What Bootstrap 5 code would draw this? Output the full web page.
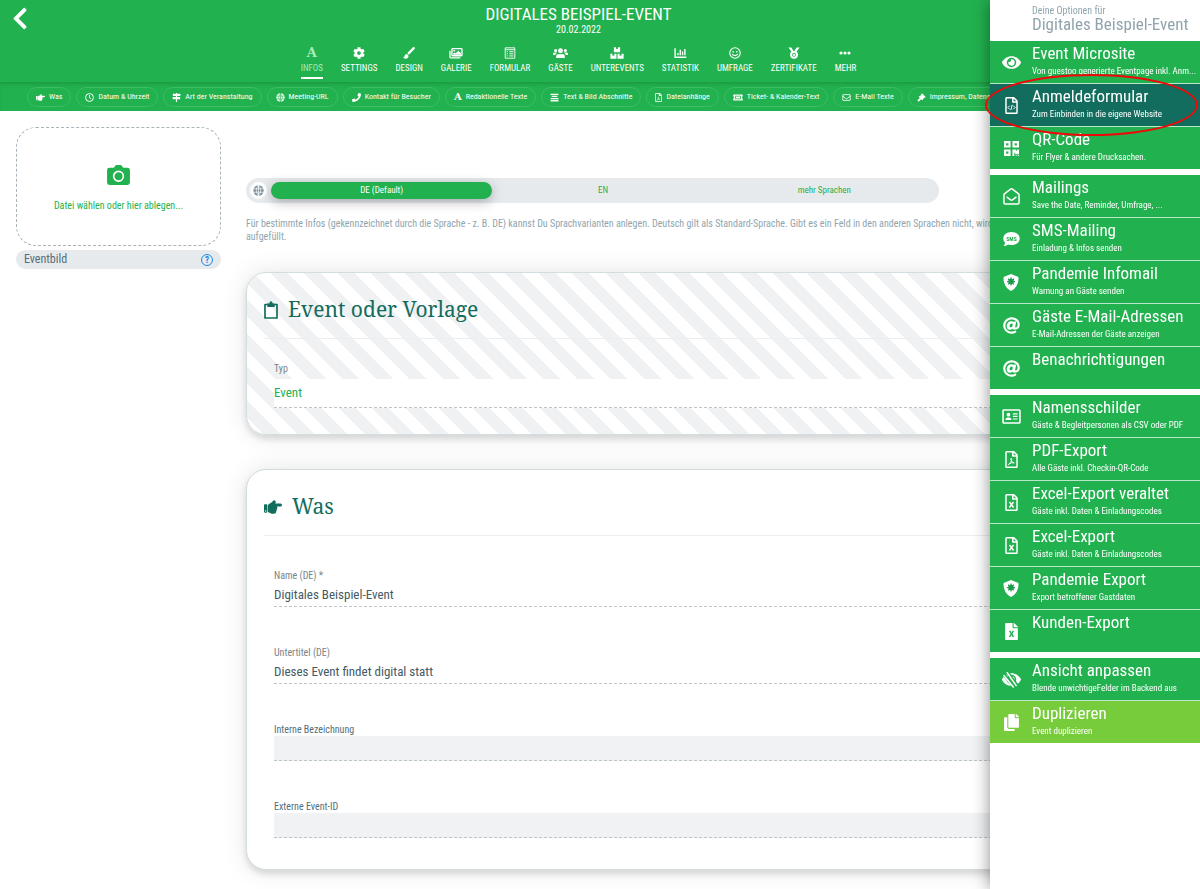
<!DOCTYPE html>
<html lang="de">
<head>
<meta charset="utf-8">
<meta name="viewport" content="width=device-width, initial-scale=1">
<title>Digitales Beispiel-Event</title>
<link href="https://cdn.jsdelivr.net/npm/bootstrap@5.3.0/dist/css/bootstrap.min.css" rel="stylesheet">
<style>
  :root {
    --brand: #22b14f;
    --teal: #136d5e;
    --slate: #546e7a;
    --mist: #90a4ae;
    --fog: #e7eaed;
  }
  body { font-family: "Roboto Condensed", "Liberation Sans Narrow", Roboto, sans-serif; font-size: 10px; line-height: 13px; color: var(--slate); background: #fff; overflow-x: hidden; }
  a { text-decoration: none; }
  .ico { fill: currentColor; flex: none; display: block; overflow: visible; }
  .ln { fill: none; stroke: currentColor; }

  .topbar { background: var(--brand); color: #fff; }
  .topbar-head { padding: 5px 43px 0 0; height: 82px; }
  .back-btn { position: absolute; left: 12px; top: 6px; color: #fff; line-height: 0; }
  .event-title { font-size: 17px; line-height: 18px; font-weight: 400; text-transform: uppercase; }
  .event-date { font-size: 10px; line-height: 13px; }
  .tabs { margin-top: 10px; gap: 18px; }
  .tabs a { color: #fff; font-size: 9px; line-height: 13px; text-transform: uppercase; padding-bottom: 2px; border-bottom: 2px solid transparent; white-space: nowrap; gap: 2px; }
  .tabs a.active { color: #a5ecbc; border-color: #fff; }
  .glyph-a { font-family: "Roboto Slab", "DejaVu Serif", serif; font-weight: 700; line-height: 14px; font-size: 13px; }
  .chips { padding: 5px 27px 4px; gap: 5px; box-shadow: inset 0 4px 5px -3px rgba(0,60,20,.28); overflow: hidden; }
  .chips a { flex: none; color: #fff; font-size: 8px; line-height: 18px; padding: 0 8px; border: 1px solid #3cbc64; border-radius: 10px; gap: 4px; white-space: nowrap; }
  .chips .glyph-a { font-size: 10px; line-height: 18px; }

  .page-body { padding: 16px 16px 20px; gap: 25px; }
  .side { flex: 0 0 205px; }
  .dropzone { height: 119px; border: 1px dashed #a9b4ba; border-radius: 20px; color: var(--brand); gap: 14px; cursor: pointer; padding-top: 4px; }
  .pic-label { margin-top: 4px; padding: 0 8px; border-radius: 10px; background: var(--fog); font-size: 12px; line-height: 19px; }
  .help { width: 12px; height: 12px; border: 1px solid #1e88e5; color: #1e88e5; border-radius: 50%; background: none; padding: 0; font-size: 9px; line-height: 10px; font-weight: 700; }

  .content-col { padding: 51px 14px 0 0; min-width: 0; }
  .langbar { background: var(--fog); border-radius: 13px; padding: 4px; }
  .langbar .globe { width: 17px; height: 17px; border-radius: 50%; background: #fff; color: #78909c; }
  .langbar button { flex: 1 1 0; border: 0; background: none; color: var(--brand); font-size: 9px; line-height: 17px; padding: 0; border-radius: 9px; }
  .langbar button.active { background: var(--brand); color: #fff; box-shadow: 0 3px 12px rgba(0,0,0,.28); }
  .hint { margin: 14px 0 29px; color: var(--mist); }

  .panel { border: 1px solid #d3dcdf; border-radius: 20px; background: #fff; box-shadow: 0 4px 6px rgba(0,0,0,.12), 0 0 26px rgba(0,0,0,.10); padding: 0 17px; }
  .panel + .panel { margin-top: 34px; }
  .panel h2 { font-family: "Roboto Slab", "Noto Serif", "DejaVu Serif", serif; font-size: 21px; line-height: 29px; font-weight: 400; color: var(--teal); padding: 22px 0 14px; margin: 0; border-bottom: 1px solid #eceff1; gap: 10px; }
  .striped { background: repeating-linear-gradient(45deg, #fff 0 12.5%, #eff1f3 12.5% 25%) left bottom / 67px 67px; padding-bottom: 26px; }
  .field { padding: 0 10px; }
  .field label { display: block; font-size: 10px; line-height: 13px; color: #78848a; }
  .field label.dark { color: var(--slate); }
  .field input, .field select { display: block; width: 100%; border: 0; border-bottom: 1px dashed #bcc5ca; border-radius: 0; background: #fff; color: #455a64; font-size: 13px; line-height: 18px; padding: 0; height: 25px; appearance: none; outline: 0; }
  .field select { height: 29px; color: var(--brand); margin-top: 4px; }
  .field input.blank { background: #f0f2f4; }
  .striped .field { padding-top: 23px; }
  .fields { padding: 33px 0 31px; }
  .fields .field + .field { margin-top: 39px; }

  .drawer.offcanvas { width: 210px; border: 0; --bs-offcanvas-bg: #fff; box-shadow: 0 0 16px rgba(0,0,0,.45); }
  .drawer-head { height: 41px; padding: 5px 0 0 42px; color: var(--mist); white-space: nowrap; }
  .drawer-head p { font-size: 10px; line-height: 11px; margin: 0; }
  .drawer-head h1 { font-size: 17px; line-height: 16px; margin: 0; font-weight: 400; }
  .group { margin-bottom: 6px; gap: 1px; background: #b9e8c8; }
  .group a { position: relative; display: flex; height: 42px; background: var(--brand); color: #fff; }
  .group a:hover, .group a.current { background: var(--teal); }
  .group a.lime { background: #77cc3b; }
  .group .icobox { flex: 0 0 42px; display: flex; align-items: center; justify-content: center; }
  .group .copy { min-width: 0; padding-top: 3px; }
  .group strong { display: block; font-weight: 400; font-size: 17px; line-height: 19px; white-space: nowrap; }
  .group small { display: block; font-size: 9px; line-height: 16px; white-space: nowrap; }
  .marker { position: absolute; left: -5px; top: -10px; width: 213px; height: 62px; border: 2px solid #f00808; border-radius: 50%; z-index: 2; pointer-events: none; }
</style>
</head>
<body>

<svg class="d-none" aria-hidden="true">
  <symbol id="i-left" viewBox="0 0 320 512"><path d="M34.52 239.03L228.87 44.69c9.37-9.37 24.57-9.37 33.94 0l22.67 22.67c9.36 9.36 9.37 24.52.04 33.9L131.49 256l154.02 154.75c9.34 9.38 9.32 24.54-.04 33.9l-22.67 22.67c-9.37 9.37-24.57 9.37-33.94 0L34.52 272.97c-9.37-9.37-9.37-24.57 0-33.94z"/></symbol>
  <symbol id="i-cog" viewBox="0 0 512 512"><path d="M487.4 315.7l-42.6-24.6c4.3-23.2 4.3-47 0-70.2l42.6-24.6c4.9-2.8 7.1-8.6 5.5-14-11.1-35.6-30-67.8-54.7-94.6-3.8-4.1-10-5.1-14.8-2.3L380.8 110c-17.9-15.4-38.5-27.3-60.8-35.1V25.8c0-5.6-3.9-10.5-9.4-11.7-36.7-8.2-74.3-7.8-109.2 0-5.5 1.2-9.4 6.1-9.4 11.7V75c-22.2 7.9-42.8 19.8-60.8 35.1L88.7 85.5c-4.9-2.8-11-1.9-14.8 2.3-24.7 26.7-43.6 58.9-54.7 94.6-1.7 5.4.6 11.2 5.5 14L67.3 221c-4.3 23.2-4.3 47 0 70.2l-42.6 24.6c-4.9 2.8-7.1 8.6-5.5 14 11.1 35.6 30 67.8 54.7 94.6 3.8 4.1 10 5.1 14.8 2.3l42.6-24.6c17.9 15.4 38.5 27.3 60.8 35.1v49.2c0 5.6 3.9 10.5 9.4 11.7 36.7 8.2 74.3 7.8 109.2 0 5.5-1.2 9.4-6.1 9.4-11.7v-49.2c22.2-7.9 42.8-19.8 60.8-35.1l42.6 24.6c4.9 2.8 11 1.9 14.8-2.3 24.7-26.7 43.6-58.9 54.7-94.6 1.5-5.5-.7-11.3-5.6-14.1zM256 336c-44.1 0-80-35.9-80-80s35.9-80 80-80 80 35.9 80 80-35.9 80-80 80z"/></symbol>
  <symbol id="i-brush" viewBox="0 0 16 16"><path d="M15.4.5c-.7-.6-1.7-.5-2.4.1L6.3 7.2c-.4.4-.5.8-.4 1.2l1.6 1.7c.4 0 .8-.1 1.1-.5l6.7-7c.7-.6.7-1.500.1-2.100zM5.200 9.300c-1.700-.1-2.700.9-3 2.200-.2 1-.7 1.700-2 2 .9 1.300 2.300 2 3.900 2 2.100 0 3.400-1.500 3.300-3.700z"/></symbol>
  <symbol id="i-images" viewBox="0 0 18 16"><path class="ln" stroke-width="1.700" d="M4.800 2.300h10.900q1 0 1 1v7.200q0 1-1 1H4.800q-1 0-1-1V3.300q0-1 1-1zM1.300 5v8q0 1.300 1.300 1.300h11.800"/><circle cx="6.800" cy="5" r="1.200"/><path d="M5.300 10.300V8.600l1.800-1.400 1.400 1.200L12 5l3.500 3.200v2.100z"/></symbol>
  <symbol id="i-form" viewBox="0 0 16 16"><path class="ln" stroke-width="1.200" d="M1.600 1.100h12.800v13.800H1.600zM1.600 3.600h12.800M7 6.300h5.500M7 9.100h5.500M7 11.900h5.500M3.600 6.300h1.600M3.600 9.100h1.600M3.600 11.900h1.600"/></symbol>
  <symbol id="i-users" viewBox="0 0 20 16"><circle cx="10" cy="5" r="3.300"/><circle cx="3.500" cy="4.600" r="2"/><circle cx="16.500" cy="4.600" r="2"/><path d="M4.200 14.500v-1.800q0-3.400 3.300-3.400 2.500.8 5 0 3.300 0 3.300 3.400v1.800zM0 10.500V9.200q0-1.900 1.900-1.900h2.300q.7 0 1.200.3Q3.400 8.800 3 10.500zM20 10.500V9.200q0-1.900-1.900-1.900h-2.300q-.7 0-1.200.3 2 1.200 2.400 2.900z"/></symbol>
  <symbol id="i-boxes" viewBox="0 0 18 16"><path d="M5 .5h2.800v2.700l1.200-.6 1.200.6V.5H13V7H5zM.5 9h2.700v2.700l1.200-.6 1.200.6V9h2.700v6.500H.5zM9.700 9h2.700v2.700l1.200-.6 1.200.6V9h2.700v6.500H9.700z"/></symbol>
  <symbol id="i-chart" viewBox="0 0 18 16"><path class="ln" stroke-width="1.900" d="M1.500 1.500v12.300h15.500M5.500 11V8M8.700 11V3.500M11.900 11V6M15.100 11V2.500"/></symbol>
  <symbol id="i-smile" viewBox="0 0 16 16"><circle class="ln" cx="8" cy="8" r="7" stroke-width="1.500"/><circle cx="5.500" cy="6.400" r="1.100"/><circle cx="10.500" cy="6.400" r="1.100"/><path class="ln" stroke-width="1.500" stroke-linecap="round" d="M4.600 9.900q3.400 3.300 6.800 0"/></symbol>
  <symbol id="i-medal" viewBox="0 0 16 16"><path d="M.5.500h4l2.600 4.200-2.300 1.500zM15.500.5h-4L8.900 4.700l2.300 1.500z"/><circle class="ln" cx="8" cy="10.300" r="3.900" stroke-width="2.700"/><path d="M8 8l.7 1.500 1.600.2-1.200 1.100.3 1.600L8 11.600l-1.400.8.3-1.600-1.200-1.100 1.600-.2z"/></symbol>
  <symbol id="i-dots" viewBox="0 0 18 16"><circle cx="3" cy="8" r="2.400"/><circle cx="9" cy="8" r="2.400"/><circle cx="15" cy="8" r="2.400"/></symbol>
  <symbol id="i-hand" viewBox="0 0 512 512"><path d="M512 199.652c0 23.625-20.65 43.826-44.8 43.826h-99.851c16.34 17.048 18.346 49.766-6.299 70.944 14.288 22.829 2.147 53.017-16.45 62.315C353.574 425.878 322.654 448 272 448c-2.746 0-13.276-.203-16-.195-61.971.168-76.894-31.065-123.731-38.315C120.596 407.683 112 397.599 112 385.786V214.261l.002-.001c.011-18.366 10.607-35.889 28.464-43.845 28.886-12.994 95.413-49.038 107.534-77.323 7.797-18.194 21.384-29.084 40-29.092 34.222-.014 57.752 35.098 44.119 66.908-3.583 8.359-8.312 16.670-14.153 24.918H467.200c23.450 0 44.800 20.543 44.800 43.826zM96 200v192c0 13.255-10.745 24-24 24H24c-13.255 0-24-10.745-24-24V200c0-13.255 10.745-24 24-24h48c13.255 0 24 10.745 24 24zM68 368c0-11.046-8.954-20-20-20s-20 8.954-20 20 8.954 20 20 20 20-8.954 20-20z"/></symbol>
  <symbol id="i-clock" viewBox="0 0 16 16"><circle class="ln" cx="8" cy="8" r="7" stroke-width="1.700"/><path class="ln" stroke-width="1.700" d="M8 3.500v4.800l2.800 2"/></symbol>
  <symbol id="i-signs" viewBox="0 0 16 16"><path d="M7 0h2v1.300h5L15.700 3.200 14 5.200H1.500V1.300H7zM7 5.200h2V7h5.500v4H9v5H7v-5H2L.3 9 2 7h5z"/></symbol>
  <symbol id="i-globe" viewBox="0 0 16 16"><circle cx="8" cy="8" r="7.500"/><path fill="none" stroke="var(--cut)" stroke-width="1" d="M0 5.500h16M0 10.500h16M8 0v16M8 .5q-6.500 7.500 0 15M8 .5q6.500 7.500 0 15"/></symbol>
  <symbol id="i-phone" viewBox="0 0 512 512"><path d="M493.400 24.600l-104-24c-11.300-2.600-22.900 3.300-27.500 13.900l-48 112c-4.200 9.800-1.400 21.300 6.900 28l60.600 49.600c-36 76.700-98.900 140.500-177.200 177.200l-49.600-60.600c-6.800-8.300-18.200-11.100-28-6.900l-112 48C3.900 366.500-2 378.100.6 389.400l24 104C27.100 504.200 36.700 512 48 512c256.100 0 464-207.500 464-464 0-11.200-7.700-20.900-18.600-23.400z"/></symbol>
  <symbol id="i-lines" viewBox="0 0 16 16"><path d="M1 1.200h14v2.300H1zM3 5h10v2.300H3zM1 8.800h14v2.300H1zM1 12.600h14v2.300H1z"/></symbol>
  <symbol id="i-file" viewBox="0 0 384 512"><path d="M369.900 97.900L286 14C277 5 264.800-.1 252.100-.1H48C21.500 0 0 21.500 0 48v416c0 26.500 21.500 48 48 48h288c26.500 0 48-21.500 48-48V131.900c0-12.700-5.100-25-14.100-34zM332.100 128H256V51.900l76.100 76.100zM48 464V48h160v104c0 13.300 10.700 24 24 24h104v288H48z"/></symbol>
  <symbol id="i-pdf" viewBox="0 0 384 512"><use href="#i-file"/><path class="ln" stroke-width="28" stroke-linejoin="round" d="M180 215q-14 30 8 78 25 52 88 64-92-18-168 34-24 30 16 8 44-34 66-106 20-44-10-78z"/></symbol>
  <symbol id="i-xls" viewBox="0 0 384 512"><use href="#i-file"/><path class="ln" stroke-width="44" d="M130 236l124 172M254 236L130 408"/></symbol>
  <symbol id="i-code" viewBox="0 0 384 512"><use href="#i-file"/><path class="ln" stroke-width="30" d="M138 262l-54 54 54 54M246 262l54 54-54 54M214 236l-44 160"/></symbol>
  <symbol id="i-xlsfull" viewBox="0 0 384 512"><path fill-rule="evenodd" d="M224 136V0H24C10.700 0 0 10.700 0 24v464c0 13.300 10.700 24 24 24h336c13.300 0 24-10.700 24-24V160H248c-13.200 0-24-10.800-24-24zM110 236h52l30 58 32-58h50l-54 90 54 96h-50l-32-62-32 62h-50l56-96zM377 105L279 7c-4.500-4.500-10.600-7-17-7h-6v128h128v-6.100c0-6.300-2.500-12.400-7-16.900z"/></symbol>
  <symbol id="i-ticket" viewBox="0 0 18 16"><path fill-rule="evenodd" d="M1.500 2.500h15q1 0 1 1v2.700q-1.500.3-1.500 1.800t1.500 1.800v2.700q0 1-1 1h-15q-1 0-1-1V9.800Q2 9.500 2 8T.5 6.200V3.500q0-1 1-1zM4 5v6h10V5z"/><path d="M5.300 6.200h7.400v3.600H5.300z"/></symbol>
  <symbol id="i-mail" viewBox="0 0 18 16"><path class="ln" stroke-width="1.700" d="M2.300 2.300h13.400q.8 0 .8.800v9.800q0 .8-.8.800H2.300q-.8 0-.8-.8V3.100q0-.8.8-.8zM2 5.500l5.500 4.300q1.500 1 3 0L16 5.500"/></symbol>
  <symbol id="i-gavel" viewBox="0 0 16 16"><path d="M9 .5l6.500 6.500-1.400 1.400-.8-.4-2.900 2.900.4.800-1.400 1.400-2.200-2.200L3 15.500.5 13l4.600-4.200-2.200-2.200 1.400-1.400.8.400L8 2.700l-.4-.8z"/></symbol>
  <symbol id="i-camera" viewBox="0 0 24 21"><path d="M2.500 3H7l1.800-2.400Q9.200 0 10 0h4q.8 0 1.200.6L17 3h4.500Q24 3 24 5.500v13q0 2.500-2.500 2.500h-19Q0 21 0 18.500v-13Q0 3 2.500 3z"/><circle cx="12" cy="11.800" r="5.100" fill="none" stroke="#fff" stroke-width="1.800"/></symbol>
  <symbol id="i-clip" viewBox="0 0 14 18"><path class="ln" stroke-width="1.700" stroke-linejoin="round" d="M1 3.500h12V17H1z"/><path d="M3.300 2.500h2Q5.500.3 7 .3t1.700 2.200h2V6H3.300z"/></symbol>
  <symbol id="i-eye" viewBox="0 0 576 512"><path d="M572.520 241.400C518.290 135.590 410.930 64 288 64S57.680 135.640 3.480 241.410a32.350 32.350 0 0 0 0 29.190C57.710 376.410 165.070 448 288 448s230.320-71.640 284.520-177.410a32.350 32.350 0 0 0 0-29.190zM288 400a144 144 0 1 1 144-144 143.930 143.930 0 0 1-144 144zm0-240a95.310 95.310 0 0 0-25.310 3.790 47.850 47.850 0 0 1-66.900 66.900A95.780 95.780 0 1 0 288 160z"/></symbol>
  <symbol id="i-lowvision" viewBox="0 0 576 512"><use href="#i-eye"/><path fill="none" stroke="#22b14f" stroke-width="104" d="M60 110l330 400M150 20l320 440"/><path class="ln" stroke-width="46" stroke-linecap="round" d="M62 140l280 345M160 50l270 390"/></symbol>
  <symbol id="i-qr" viewBox="0 0 16 16"><path fill-rule="evenodd" d="M0 0h7v7H0zM2.300 2.300v2.400h2.400V2.300zM9 0h7v7H9zM11.300 2.300v2.400h2.400V2.300zM0 9h7v7H0zM2.300 11.300v2.400h2.400v-2.400zM9 9h4v1.500h1V9h2v5h-4v-1.500h-1V16H9zM12.500 15h1v1h-1zM14.800 15H16v1h-1.200z"/></symbol>
  <symbol id="i-open" viewBox="0 0 18 18"><path class="ln" stroke-width="1.600" stroke-linejoin="round" d="M1 7.200Q1 6.600 1.500 6.200L8 1.200q1-.7 2 0l6.500 5q.5.400.5 1V15.500q0 1.400-1.400 1.400H2.400Q1 16.900 1 15.500zM3.800 9.500L8 12.600q1 .7 2 0l4.200-3.100"/></symbol>
  <symbol id="i-sms" viewBox="0 0 18 16"><path d="M9 .5c5 0 8.700 3 8.700 6.900S14 14.300 9 14.300q-2 0-3.600-.6Q3.300 15.500.5 15.500q1.500-1.600 1.700-3.400Q.3 10 .3 7.400C.3 3.500 4 .5 9 .5z"/><text x="9" y="9.600" text-anchor="middle" font-size="6" font-weight="700" style="fill:var(--brand)">SMS</text></symbol>
  <symbol id="i-shield" viewBox="0 0 16 18"><path d="M8 0l7.200 3q.8.300.8 1.200 0 9.500-8 13.800Q0 13.700 0 4.200 0 3.300.8 3z"/><g fill="none" stroke="#1b9a4c" stroke-width="1.300"><circle cx="8" cy="8" r="2.300" fill="#22b14f"/><path d="M8 3.800v8.400M3.800 8h8.400M5 5l6 6M11 5l-6 6"/></g></symbol>
  <symbol id="i-at" viewBox="0 0 512 512"><path d="M256 8C118.941 8 8 118.919 8 256c0 137.059 110.919 248 248 248 48.154 0 95.342-14.140 135.408-40.223 12.005-7.815 14.625-24.288 5.552-35.372l-10.177-12.433c-7.671-9.371-21.179-11.667-31.373-5.129C325.920 429.757 291.314 440 256 440c-101.458 0-184-82.542-184-184S154.542 72 256 72c100.139 0 184 57.619 184 160 0 38.786-21.093 79.742-58.170 83.693-17.349-.454-16.910-12.857-13.476-30.024l23.433-121.110C394.653 149.750 383.308 136 368.225 136h-44.981a13.518 13.518 0 0 0-13.432 11.993l-.01.092c-14.697-17.901-40.448-21.775-59.971-21.775-74.580 0-137.831 62.234-137.831 151.460 0 65.303 36.785 105.870 96 105.870 26.984 0 57.369-15.637 74.991-38.333 9.522 34.104 40.613 34.104 70.671 34.104C462.609 379.410 504 307.798 504 232 504 95.653 394.023 8 256 8zm-21.680 304.430c-22.249 0-36.070-15.623-36.070-40.771 0-44.993 30.779-72.729 58.630-72.729 22.292 0 35.601 15.241 35.601 40.770 0 45.061-33.875 72.730-58.161 72.730z"/></symbol>
  <symbol id="i-card" viewBox="0 0 20 16"><path class="ln" stroke-width="1.700" d="M2 1h16q1 0 1 1v12q0 1-1 1H2q-1 0-1-1V2q0-1 1-1z"/><circle cx="6.700" cy="6" r="2"/><path d="M3.400 11.800q0-2.800 2.200-2.800h2.200Q10 9 10 11.800zM11.500 4.600h5v1.300h-5zM11.500 7.300h5v1.300h-5zM11.500 10h5v1.300h-5z"/></symbol>
  <symbol id="i-copy" viewBox="0 0 448 512"><path d="M320 448v40c0 13.255-10.745 24-24 24H24c-13.255 0-24-10.745-24-24V120c0-13.255 10.745-24 24-24h72v296c0 30.879 25.121 56 56 56h168zm0-344V0H152c-13.255 0-24 10.745-24 24v368c0 13.255 10.745 24 24 24h272c13.255 0 24-10.745 24-24V128H344c-13.200 0-24-10.800-24-24zm120.971-31.029L375.029 7.029A24 24 0 0 0 358.059 0H352v96h96v-6.059a24 24 0 0 0-7.029-16.970z"/></symbol>
</svg>

<header class="topbar">
  <div class="topbar-head position-relative text-center">
    <a class="back-btn" href="#" aria-label="Zurück"><svg class="ico" width="16" height="25"><use href="#i-left"/></svg></a>
    <div class="event-title">Digitales Beispiel-Event</div>
    <div class="event-date">20.02.2022</div>
    <nav class="tabs d-flex justify-content-center" aria-label="Bereiche">
      <a href="#" class="active d-flex flex-column align-items-center"><span class="glyph-a" aria-hidden="true">A</span>Infos</a>
      <a href="#" class="d-flex flex-column align-items-center"><svg class="ico" width="12" height="14"><use href="#i-cog"/></svg>Settings</a>
      <a href="#" class="d-flex flex-column align-items-center"><svg class="ico" width="12" height="14"><use href="#i-brush"/></svg>Design</a>
      <a href="#" class="d-flex flex-column align-items-center"><svg class="ico" width="14" height="14"><use href="#i-images"/></svg>Galerie</a>
      <a href="#" class="d-flex flex-column align-items-center"><svg class="ico" width="12" height="14"><use href="#i-form"/></svg>Formular</a>
      <a href="#" class="d-flex flex-column align-items-center"><svg class="ico" width="15" height="14"><use href="#i-users"/></svg>Gäste</a>
      <a href="#" class="d-flex flex-column align-items-center"><svg class="ico" width="14" height="14"><use href="#i-boxes"/></svg>Unterevents</a>
      <a href="#" class="d-flex flex-column align-items-center"><svg class="ico" width="13" height="14"><use href="#i-chart"/></svg>Statistik</a>
      <a href="#" class="d-flex flex-column align-items-center"><svg class="ico" width="12" height="14"><use href="#i-smile"/></svg>Umfrage</a>
      <a href="#" class="d-flex flex-column align-items-center"><svg class="ico" width="12" height="14"><use href="#i-medal"/></svg>Zertifikate</a>
      <a href="#" class="d-flex flex-column align-items-center"><svg class="ico" width="12" height="14"><use href="#i-dots"/></svg>Mehr</a>
    </nav>
  </div>
  <nav class="chips d-flex" aria-label="Abschnitte">
    <a href="#was" class="d-flex align-items-center"><svg class="ico" width="9" height="9"><use href="#i-hand"/></svg>Was</a>
    <a href="#" class="d-flex align-items-center"><svg class="ico" width="9" height="9"><use href="#i-clock"/></svg>Datum &amp; Uhrzeit</a>
    <a href="#" class="d-flex align-items-center"><svg class="ico" width="9" height="9"><use href="#i-signs"/></svg>Art der Veranstaltung</a>
    <a href="#" class="d-flex align-items-center"><svg class="ico" width="9" height="9" style="--cut:#22b14f"><use href="#i-globe"/></svg>Meeting-URL</a>
    <a href="#" class="d-flex align-items-center"><svg class="ico" width="9" height="9"><use href="#i-phone"/></svg>Kontakt für Besucher</a>
    <a href="#" class="d-flex align-items-center"><span class="glyph-a" aria-hidden="true">A</span>Redaktionelle Texte</a>
    <a href="#" class="d-flex align-items-center"><svg class="ico" width="9" height="9"><use href="#i-lines"/></svg>Text &amp; Bild Abschnitte</a>
    <a href="#" class="d-flex align-items-center"><svg class="ico" width="7" height="9"><use href="#i-pdf"/></svg>Dateianhänge</a>
    <a href="#" class="d-flex align-items-center"><svg class="ico" width="10" height="9"><use href="#i-ticket"/></svg>Ticket- &amp; Kalender-Text</a>
    <a href="#" class="d-flex align-items-center"><svg class="ico" width="9" height="9"><use href="#i-mail"/></svg>E-Mail Texte</a>
    <a href="#" class="d-flex align-items-center"><svg class="ico" width="9" height="9"><use href="#i-gavel"/></svg>Impressum, Datenschutz</a>
  </nav>
</header>

<div class="page-body d-flex">
  <aside class="side">
    <label class="dropzone d-flex flex-column align-items-center justify-content-center">
      <svg class="ico" width="23" height="20"><use href="#i-camera"/></svg>
      <span>Datei wählen oder hier ablegen...</span>
      <input type="file" class="visually-hidden">
    </label>
    <div class="pic-label d-flex align-items-center justify-content-between">
      <span>Eventbild</span>
      <button type="button" class="help">?</button>
    </div>
  </aside>

  <main class="content-col flex-grow-1">
    <div class="langbar d-flex w-75">
      <span class="globe d-flex align-items-center justify-content-center flex-shrink-0 me-1"><svg class="ico" width="11" height="11" style="--cut:#fff"><use href="#i-globe"/></svg></span>
      <button type="button" class="active">DE (Default)</button>
      <button type="button">EN</button>
      <button type="button">mehr Sprachen</button>
    </div>
    <p class="hint">Für bestimmte Infos (gekennzeichnet durch die Sprache - z. B. DE) kannst Du Sprachvarianten anlegen. Deutsch gilt als Standard-Sprache. Gibt es ein Feld in den anderen Sprachen nicht, wird es<br>aufgefüllt.</p>

    <section class="panel striped">
      <h2 class="d-flex align-items-center"><svg class="ico" width="14" height="18"><use href="#i-clip"/></svg>Event oder Vorlage</h2>
      <div class="field">
        <label for="typ">Typ</label>
        <select id="typ"><option>Event</option></select>
      </div>
    </section>

    <section class="panel" id="was">
      <h2 class="d-flex align-items-center"><svg class="ico" width="18" height="18"><use href="#i-hand"/></svg>Was</h2>
      <div class="fields">
        <div class="field"><label for="name">Name (DE) *</label><input id="name" type="text" value="Digitales Beispiel-Event"></div>
        <div class="field"><label for="sub">Untertitel (DE)</label><input id="sub" type="text" value="Dieses Event findet digital statt"></div>
        <div class="field"><label class="dark" for="intern">Interne Bezeichnung</label><input class="blank" id="intern" type="text"></div>
        <div class="field"><label class="dark" for="extern">Externe Event-ID</label><input class="blank" id="extern" type="text"></div>
      </div>
    </section>
  </main>
</div>

<aside class="drawer offcanvas offcanvas-end show" data-bs-backdrop="false" data-bs-scroll="true" tabindex="-1" aria-label="Optionen">
  <div class="drawer-head">
    <p>Deine Optionen für</p>
    <h1>Digitales Beispiel-Event</h1>
  </div>
  <nav class="group d-flex flex-column">
    <a href="#"><span class="icobox"><svg class="ico" width="19" height="17"><use href="#i-eye"/></svg></span><span class="copy"><strong>Event Microsite</strong><small>Von guestoo generierte Eventpage inkl. Anm...</small></span></a>
    <a href="#" class="current"><span class="icobox"><svg class="ico" width="13" height="17"><use href="#i-code"/></svg></span><span class="copy"><strong>Anmeldeformular</strong><small>Zum Einbinden in die eigene Website</small></span><span class="marker"></span></a>
    <a href="#"><span class="icobox"><svg class="ico" width="15" height="15"><use href="#i-qr"/></svg></span><span class="copy"><strong>QR-Code</strong><small>Für Flyer &amp; andere Drucksachen.</small></span></a>
  </nav>
  <nav class="group d-flex flex-column">
    <a href="#"><span class="icobox"><svg class="ico" width="17" height="17"><use href="#i-open"/></svg></span><span class="copy"><strong>Mailings</strong><small>Save the Date, Reminder, Umfrage, ...</small></span></a>
    <a href="#"><span class="icobox"><svg class="ico" width="17" height="16"><use href="#i-sms"/></svg></span><span class="copy"><strong>SMS-Mailing</strong><small>Einladung &amp; Infos senden</small></span></a>
    <a href="#"><span class="icobox"><svg class="ico" width="16" height="17"><use href="#i-shield"/></svg></span><span class="copy"><strong>Pandemie Infomail</strong><small>Warnung an Gäste senden</small></span></a>
    <a href="#"><span class="icobox"><svg class="ico" width="17" height="17"><use href="#i-at"/></svg></span><span class="copy"><strong>Gäste E-Mail-Adressen</strong><small>E-Mail-Adressen der Gäste anzeigen</small></span></a>
    <a href="#"><span class="icobox"><svg class="ico" width="17" height="17"><use href="#i-at"/></svg></span><span class="copy"><strong>Benachrichtigungen</strong></span></a>
  </nav>
  <nav class="group d-flex flex-column">
    <a href="#"><span class="icobox"><svg class="ico" width="19" height="15"><use href="#i-card"/></svg></span><span class="copy"><strong>Namensschilder</strong><small>Gäste &amp; Begleitpersonen als CSV oder PDF</small></span></a>
    <a href="#"><span class="icobox"><svg class="ico" width="13" height="17"><use href="#i-pdf"/></svg></span><span class="copy"><strong>PDF-Export</strong><small>Alle Gäste inkl. Checkin-QR-Code</small></span></a>
    <a href="#"><span class="icobox"><svg class="ico" width="13" height="17"><use href="#i-xls"/></svg></span><span class="copy"><strong>Excel-Export veraltet</strong><small>Gäste inkl. Daten &amp; Einladungscodes</small></span></a>
    <a href="#"><span class="icobox"><svg class="ico" width="13" height="17"><use href="#i-xls"/></svg></span><span class="copy"><strong>Excel-Export</strong><small>Gäste inkl. Daten &amp; Einladungscodes</small></span></a>
    <a href="#"><span class="icobox"><svg class="ico" width="16" height="17"><use href="#i-shield"/></svg></span><span class="copy"><strong>Pandemie Export</strong><small>Export betroffener Gastdaten</small></span></a>
    <a href="#"><span class="icobox"><svg class="ico" width="13" height="17"><use href="#i-xlsfull"/></svg></span><span class="copy"><strong>Kunden-Export</strong></span></a>
  </nav>
  <nav class="group d-flex flex-column">
    <a href="#"><span class="icobox"><svg class="ico" width="19" height="17"><use href="#i-lowvision"/></svg></span><span class="copy"><strong>Ansicht anpassen</strong><small>Blende unwichtigeFelder im Backend aus</small></span></a>
    <a href="#" class="lime"><span class="icobox"><svg class="ico" width="15" height="17"><use href="#i-copy"/></svg></span><span class="copy"><strong>Duplizieren</strong><small>Event duplizieren</small></span></a>
  </nav>
</aside>

<script src="https://cdn.jsdelivr.net/npm/bootstrap@5.3.0/dist/js/bootstrap.bundle.min.js"></script>
</body>
</html>
